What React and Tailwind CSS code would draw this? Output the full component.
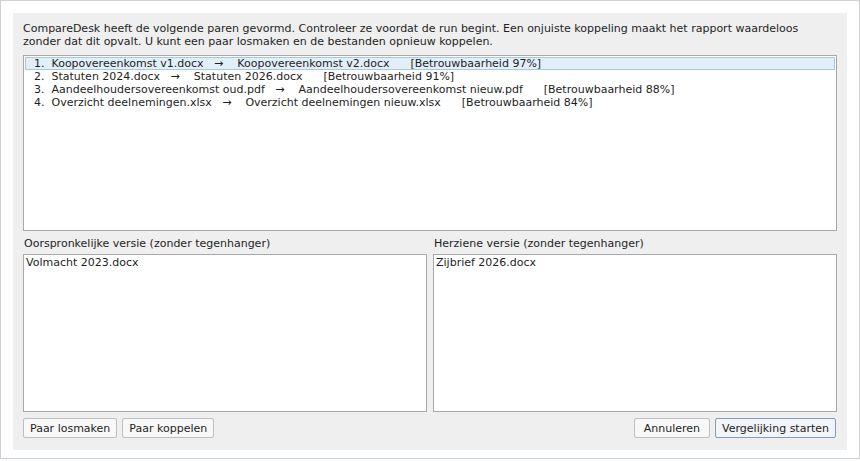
import React from "react";

const rows = [
  ["1.", "Koopovereenkomst v1.docx", "Koopovereenkomst v2.docx", "97%"],
  ["2.", "Statuten 2024.docx", "Statuten 2026.docx", "91%"],
  ["3.", "Aandeelhoudersovereenkomst oud.pdf", "Aandeelhoudersovereenkomst nieuw.pdf", "88%"],
  ["4.", "Overzicht deelnemingen.xlsx", "Overzicht deelnemingen nieuw.xlsx", "84%"],
];

export default function App() {
  return (
    <div
      className="w-[860px] h-[461px] bg-white text-[11px] leading-[13px] text-[#1e1e1e]"
      style={{ fontFamily: '"DejaVu Sans", sans-serif' }}
    >
      <div className="h-[459px] border border-[#d0d0d0] border-b-[#c3cfdc] pt-[12px] px-[12px] pb-[8px]">
        <div className="h-full bg-[#efefef] px-[10px] pt-[9px] pb-[10px] flex flex-col">
          <p className="m-0">
            CompareDesk heeft de volgende paren gevormd. Controleer ze voordat de run begint. Een onjuiste koppeling maakt het rapport waardeloos
            <br />
            zonder dat dit opvalt. U kunt een paar losmaken en de bestanden opnieuw koppelen.
          </p>
          <div className="mt-[7px] h-[176px] bg-white border border-[#a9a9a9] p-px">
            {rows.map((r, i) => (
              <div
                key={i}
                className={
                  "h-[13px] whitespace-pre pl-[9px] " +
                  (i === 0 ? "bg-[#e2eff9] outline outline-1 -outline-offset-1 outline-[#a7c7e3]" : "")
                }
              >
                {r[0] + "  " + r[1] + "   →    " + r[2] + "      [Betrouwbaarheid " + r[3] + "]"}
              </div>
            ))}
          </div>
          <div className="mt-[6px] grid grid-cols-2 gap-[6px]">
            <div className="flex flex-col">
              <div className="h-[13px] ml-px">Oorspronkelijke versie (zonder tegenhanger)</div>
              <div className="mt-[4px] h-[158px] bg-white border border-[#a9a9a9] px-[2px] pt-[1px]">
                Volmacht 2023.docx
              </div>
            </div>
            <div className="flex flex-col">
              <div className="h-[13px] ml-px">Herziene versie (zonder tegenhanger)</div>
              <div className="mt-[4px] h-[158px] bg-white border border-[#a9a9a9] px-[2px] pt-[1px]">
                Zijbrief 2026.docx
              </div>
            </div>
          </div>
          <div className="mt-[6px] flex items-center">
            <button className="h-[20px] px-[6px] bg-[#f8f8f8] border border-[#bdbdbd] rounded-[2px] text-[#1e1e1e]">
              Paar losmaken
            </button>
            <button className="ml-[5px] h-[20px] px-[6px] bg-[#f8f8f8] border border-[#bdbdbd] rounded-[2px] text-[#1e1e1e]">
              Paar koppelen
            </button>
            <div className="flex-1" />
            <button className="h-[20px] px-[9px] bg-[#f8f8f8] border border-[#bdbdbd] rounded-[2px] text-[#1e1e1e]">
              Annuleren
            </button>
            <button className="ml-[5px] mr-px h-[20px] px-[6px] bg-[#f1f4f8] border border-[#7f9dbd] rounded-[2px] text-[#1e1e1e]">
              Vergelijking starten
            </button>
          </div>
        </div>
      </div>
    </div>
  );
}
